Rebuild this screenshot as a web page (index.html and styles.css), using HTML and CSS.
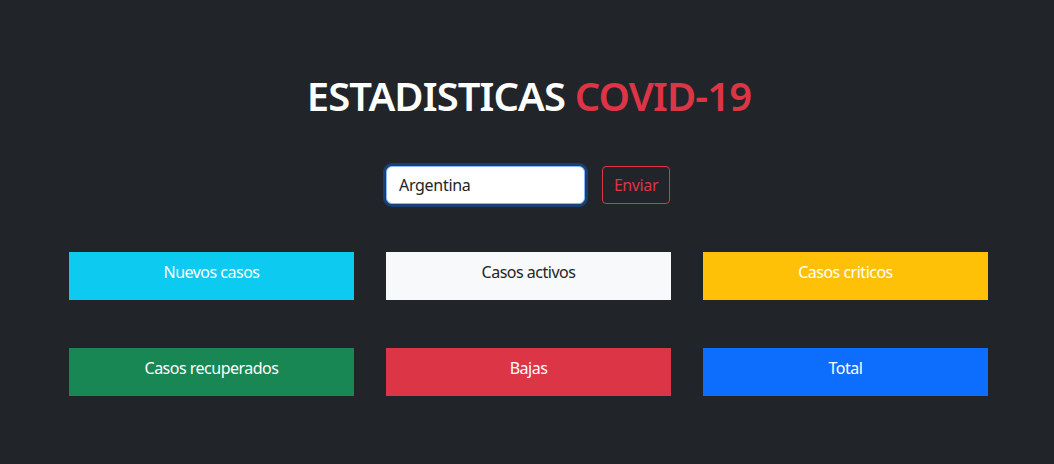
FILE: index.html
```html
<!DOCTYPE html>
<html lang="es">
<head>
<meta charset="utf-8">
<title>Estadisticas COVID-19</title>
<link rel="stylesheet" href="styles.css">
</head>
<body>
<main class="page">
  <h1 class="title">ESTADISTICAS <span class="accent">COVID-19</span></h1>
  <form class="search">
    <input class="search-input" type="text" value="Argentina">
    <button class="btn-send" type="button">Enviar</button>
  </form>
  <section class="grid">
    <div class="stat stat-info">Nuevos casos</div>
    <div class="stat stat-light">Casos activos</div>
    <div class="stat stat-warning">Casos criticos</div>
    <div class="stat stat-success">Casos recuperados</div>
    <div class="stat stat-danger">Bajas</div>
    <div class="stat stat-primary">Total</div>
  </section>
</main>
</body>
</html>
```

FILE: styles.css
```css
* { box-sizing: border-box; }
html, body {
  margin: 0;
  background: #212529;
  color: #fff;
  font-family: "Noto Sans", "Open Sans", sans-serif;
  font-size: 16px;
  line-height: 1.5;
  letter-spacing: -0.5px;
}
.page {
  padding-top: 72px;
  display: flex;
  flex-direction: column;
  align-items: center;
}
.title {
  margin: 0;
  font-size: 40px;
  font-weight: 600;
  line-height: 48px;
  letter-spacing: -0.9px;
  padding-left: 4px;
}
.accent { color: #dc3545; }
.search {
  margin-top: 46px;
  display: flex;
  gap: 17px;
  padding-left: 2px;
}
.search-input {
  width: 199px;
  height: 38px;
  padding: 6px 12px;
  border: 1px solid #86b7fe;
  border-radius: 6px;
  background: #fff;
  color: #212529;
  font: inherit;
  letter-spacing: -0.3px;
  outline: 0;
  box-shadow: 0 0 0 3px #1c3f73;
}
.btn-send {
  width: 68px;
  height: 38px;
  padding: 6px 0;
  border: 1px solid #dc3545;
  border-radius: 4px;
  background: transparent;
  color: #dc3545;
  font: inherit;
  letter-spacing: -0.4px;
}
.grid {
  margin-top: 48px;
  display: grid;
  grid-template-columns: repeat(3, 285px);
  column-gap: 32px;
  row-gap: 48px;
  padding-left: 3px;
}
.stat {
  height: 48px;
  padding: 8px 0 16px;
  text-align: center;
  color: #fff;
  line-height: 24px;
}
.stat-info { background: #0dcaf0; }
.stat-light { background: #f8f9fa; color: #212529; }
.stat-warning { background: #ffc107; }
.stat-success { background: #198754; }
.stat-danger { background: #dc3545; }
.stat-primary { background: #0d6efd; }
```
